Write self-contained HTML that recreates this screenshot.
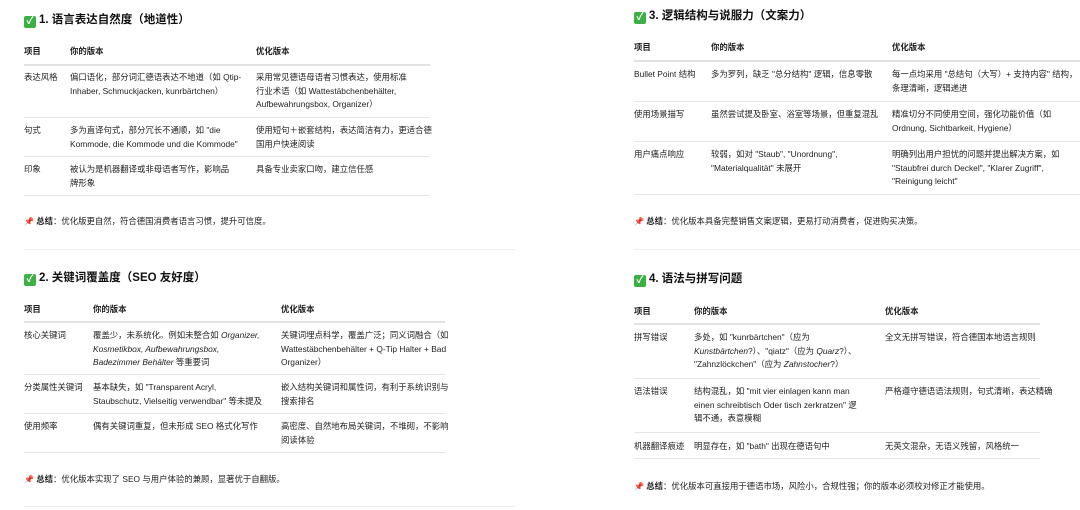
<!DOCTYPE html>
<html><head><meta charset="utf-8"><style>
body{margin:0;width:1080px;height:510px;background:#fff;position:relative;overflow:hidden;font-family:"Liberation Sans","Noto Sans CJK SC",sans-serif;color:#222;}
.t{position:absolute;font-size:8.4px;line-height:13.5px;white-space:nowrap;color:#1e1e1e}
.h{position:absolute;font-size:11.5px;font-weight:bold;line-height:14px;white-space:nowrap;color:#111}
.b{font-weight:bold}
.l{position:absolute;height:1px;background:#e6e6e6}
.hl{position:absolute;height:2px;background:#e2e2e2}
.ck{display:inline-block;width:12px;height:12px;background:#3cb043;border-radius:2px;color:#fff;font-size:10px;line-height:12px;text-align:center;vertical-align:-1px;margin-right:3px}
.pin{color:#d22;font-size:8px}
</style></head><body>

<!-- Panel 1 -->
<div class="h" style="left:24px;top:13px"><span class="ck">✓</span>1. 语言表达自然度（地道性）</div>
<div class="t b" style="left:24px;top:45px">项目</div>
<div class="t b" style="left:70px;top:45px">你的版本</div>
<div class="t b" style="left:256px;top:45px">优化版本</div>
<div class="hl" style="left:24px;top:64px;width:406px"></div>
<div class="t" style="left:24px;top:71px">表达风格</div>
<div class="t" style="left:70px;top:71px">偏口语化，部分词汇德语表达不地道（如 Qtip-<br>Inhaber, Schmuckjacken, kunrbärtchen）</div>
<div class="t" style="left:256px;top:71px">采用常见德语母语者习惯表达，使用标准<br>行业术语（如 Wattestäbchenbehälter,<br>Aufbewahrungsbox, Organizer）</div>
<div class="l" style="left:24px;top:117px;width:406px"></div>
<div class="t" style="left:24px;top:124px">句式</div>
<div class="t" style="left:70px;top:124px">多为直译句式，部分冗长不通顺，如 "die<br>Kommode, die Kommode und die Kommode"</div>
<div class="t" style="left:256px;top:124px">使用短句＋嵌套结构，表达简洁有力，更适合德<br>国用户快速阅读</div>
<div class="l" style="left:24px;top:156px;width:406px"></div>
<div class="t" style="left:24px;top:163px">印象</div>
<div class="t" style="left:70px;top:163px">被认为是机器翻译或非母语者写作，影响品<br>牌形象</div>
<div class="t" style="left:256px;top:163px">具备专业卖家口吻，建立信任感</div>
<div class="l" style="left:24px;top:195px;width:406px"></div>
<div class="t" style="left:24px;top:215px"><span class="pin">📌</span> <b>总结</b>：优化版更自然，符合德国消费者语言习惯，提升可信度。</div>
<div class="l" style="left:24px;top:249px;width:491px;background:#eee"></div>

<!-- Panel 2 (bottom-left) -->
<div class="h" style="left:24px;top:271px"><span class="ck">✓</span>2. 关键词覆盖度（SEO 友好度）</div>
<div class="t b" style="left:24px;top:303px">项目</div>
<div class="t b" style="left:93px;top:303px">你的版本</div>
<div class="t b" style="left:281px;top:303px">优化版本</div>
<div class="hl" style="left:24px;top:321px;width:421px"></div>
<div class="t" style="left:24px;top:329px">核心关键词</div>
<div class="t" style="left:93px;top:329px">覆盖少，未系统化。例如未整合如 <i>Organizer,<br>Kosmetikbox, Aufbewahrungsbox,<br>Badezimmer Behälter</i> 等重要词</div>
<div class="t" style="left:281px;top:329px">关键词埋点科学，覆盖广泛；同义词融合（如<br>Wattestäbchenbehälter + Q-Tip Halter + Bad<br>Organizer）</div>
<div class="l" style="left:24px;top:374px;width:421px"></div>
<div class="t" style="left:24px;top:381px">分类属性关键词</div>
<div class="t" style="left:93px;top:381px">基本缺失，如 "Transparent Acryl,<br>Staubschutz, Vielseitig verwendbar" 等未提及</div>
<div class="t" style="left:281px;top:381px">嵌入结构关键词和属性词，有利于系统识别与<br>搜索排名</div>
<div class="l" style="left:24px;top:413px;width:421px"></div>
<div class="t" style="left:24px;top:420px">使用频率</div>
<div class="t" style="left:93px;top:420px">偶有关键词重复，但未形成 SEO 格式化写作</div>
<div class="t" style="left:281px;top:420px">高密度、自然地布局关键词，不堆砌，不影响<br>阅读体验</div>
<div class="l" style="left:24px;top:452px;width:421px"></div>
<div class="t" style="left:24px;top:473px"><span class="pin">📌</span> <b>总结</b>：优化版本实现了 SEO 与用户体验的兼顾，显著优于自翻版。</div>
<div class="l" style="left:24px;top:506px;width:491px;background:#eee"></div>

<!-- Panel 3 (top-right) -->
<div class="h" style="left:634px;top:9px"><span class="ck">✓</span>3. 逻辑结构与说服力（文案力）</div>
<div class="t b" style="left:634px;top:41px">项目</div>
<div class="t b" style="left:711px;top:41px">你的版本</div>
<div class="t b" style="left:892px;top:41px">优化版本</div>
<div class="hl" style="left:634px;top:60px;width:446px"></div>
<div class="t" style="left:634px;top:68px">Bullet Point 结构</div>
<div class="t" style="left:711px;top:68px">多为罗列，缺乏 "总分结构" 逻辑，信息零散</div>
<div class="t" style="left:892px;top:68px">每一点均采用 "总结句（大写）+ 支持内容" 结构，<br>条理清晰，逻辑递进</div>
<div class="l" style="left:634px;top:101px;width:446px"></div>
<div class="t" style="left:634px;top:108px">使用场景描写</div>
<div class="t" style="left:711px;top:108px">虽然尝试提及卧室、浴室等场景，但重复混乱</div>
<div class="t" style="left:892px;top:108px">精准切分不同使用空间，强化功能价值（如<br>Ordnung, Sichtbarkeit, Hygiene）</div>
<div class="l" style="left:634px;top:141px;width:446px"></div>
<div class="t" style="left:634px;top:148px">用户痛点响应</div>
<div class="t" style="left:711px;top:148px">较弱，如对 "Staub", "Unordnung",<br>"Materialqualität" 未展开</div>
<div class="t" style="left:892px;top:148px">明确列出用户担忧的问题并提出解决方案，如<br>"Staubfrei durch Deckel", "Klarer Zugriff",<br>"Reinigung leicht"</div>
<div class="l" style="left:634px;top:194px;width:446px"></div>
<div class="t" style="left:634px;top:215px"><span class="pin">📌</span> <b>总结</b>：优化版本具备完整销售文案逻辑，更易打动消费者，促进购买决策。</div>
<div class="l" style="left:634px;top:249px;width:446px;background:#eee"></div>

<!-- Panel 4 -->
<div class="h" style="left:634px;top:272px"><span class="ck">✓</span>4. 语法与拼写问题</div>
<div class="t b" style="left:634px;top:305px">项目</div>
<div class="t b" style="left:694px;top:305px">你的版本</div>
<div class="t b" style="left:885px;top:305px">优化版本</div>
<div class="hl" style="left:634px;top:323px;width:406px"></div>
<div class="t" style="left:634px;top:331px">拼写错误</div>
<div class="t" style="left:694px;top:331px">多处，如 "kunrbärtchen"（应为<br><i>Kunstbärtchen</i>?）、"qiatz"（应为 <i>Quarz</i>?）、<br>"Zahnzlöckchen"（应为 <i>Zahnstocher</i>?）</div>
<div class="t" style="left:885px;top:331px">全文无拼写错误，符合德国本地语言规则</div>
<div class="l" style="left:634px;top:378px;width:406px"></div>
<div class="t" style="left:634px;top:385px">语法错误</div>
<div class="t" style="left:694px;top:385px">结构混乱，如 "mit vier einlagen kann man<br>einen schreibtisch Oder tisch zerkratzen" 逻<br>辑不通，表意模糊</div>
<div class="t" style="left:885px;top:385px">严格遵守德语语法规则，句式清晰，表达精确</div>
<div class="l" style="left:634px;top:432px;width:406px"></div>
<div class="t" style="left:634px;top:440px">机器翻译痕迹</div>
<div class="t" style="left:694px;top:440px">明显存在，如 "bath" 出现在德语句中</div>
<div class="t" style="left:885px;top:440px">无英文混杂，无语义残留，风格统一</div>
<div class="l" style="left:634px;top:458px;width:406px"></div>
<div class="t" style="left:634px;top:480px"><span class="pin">📌</span> <b>总结</b>：优化版本可直接用于德语市场，风险小，合规性强；你的版本必须校对修正才能使用。</div>

</body></html>
